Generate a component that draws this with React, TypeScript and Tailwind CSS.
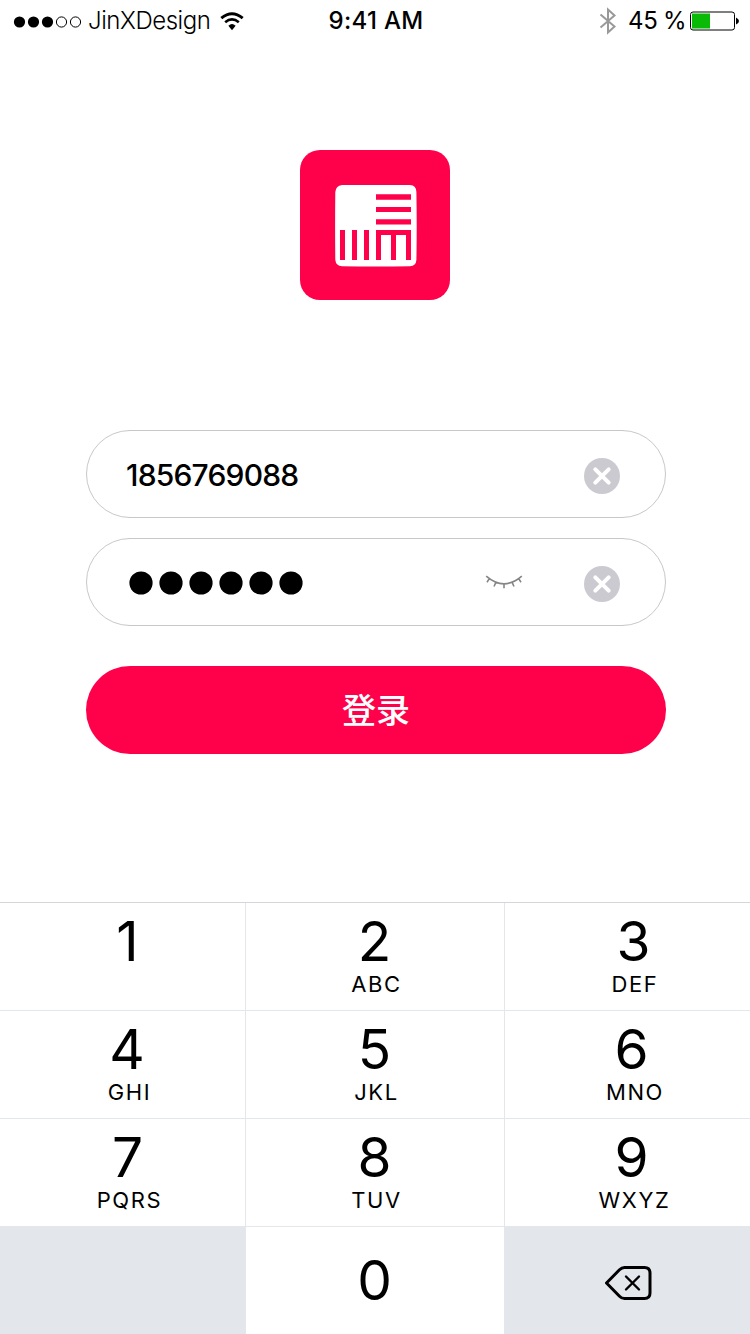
import React from "react";

type Key = { digit: string; letters?: string; digitShift: string; letterShift?: string };

const keys: Key[] = [
  { digit: "1", digitShift: "pl-[10px]" },
  { digit: "2", letters: "ABC", digitShift: "pr-[1px]", letterShift: "pl-[3px]" },
  { digit: "3", letters: "DEF", digitShift: "pl-[12px]", letterShift: "pl-[15px]" },
  { digit: "4", letters: "GHI", digitShift: "pl-[9px]", letterShift: "pl-[14px]" },
  { digit: "5", letters: "JKL", digitShift: "pr-[1px]", letterShift: "pl-[3px]" },
  { digit: "6", letters: "MNO", digitShift: "pl-[8px]", letterShift: "pl-[15px]" },
  { digit: "7", letters: "PQRS", digitShift: "pl-[10px]", letterShift: "pl-[14px]" },
  { digit: "8", letters: "TUV", digitShift: "pr-[1px]", letterShift: "pl-[3px]" },
  { digit: "9", letters: "WXYZ", digitShift: "pl-[8px]", letterShift: "pl-[14px]" },
];

function StatusBar() {
  return (
    <header className="grid h-10 grid-cols-[1fr_auto_1fr] text-black">
      <div className="flex h-10 items-center pl-[13px]">
        <svg width="70" height="14" viewBox="0 0 70 14" className="mt-[3px]">
          <circle cx="6.5" cy="7" r="5.6" />
          <circle cx="20.5" cy="7" r="5.6" />
          <circle cx="34.5" cy="7" r="5.6" />
          <circle cx="48.5" cy="7" r="5.1" fill="none" stroke="#000" />
          <circle cx="62.5" cy="7" r="5.1" fill="none" stroke="#000" />
        </svg>
        <span className="ml-[5px] w-[123px] pt-px text-[24px] leading-10 font-[350] tracking-[-0.45px] whitespace-nowrap">JinXDesign</span>
        <svg width="24" height="19" viewBox="0 0 24 19" className="mt-[2px] ml-[9px]">
          <path d="M1.3 6.2Q12 -2.8 22.7 6.2" fill="none" stroke="#000" strokeWidth="2.9" />
          <path d="M5.2 10.2Q12 4.6 18.8 10.2" fill="none" stroke="#000" strokeWidth="2.7" />
          <path d="M8.4 13.8Q12 10.4 15.6 13.8L12 18.2Z" />
        </svg>
      </div>
      <div className="pt-px pl-[2px] text-[24px] leading-10 font-[470] tracking-[0.3px]">9:41 AM</div>
      <div className="flex h-10 items-center justify-end pr-[11px]">
        <svg width="18" height="28" viewBox="0 0 18 28" className="mt-[2px]">
          <path d="M1.5 7.5L15.5 19.5L9 25.5V2.5L15.5 8.5L1.5 20.5" fill="none" stroke="#999" strokeWidth="2" />
        </svg>
        <span className="ml-[11px] w-[57px] pt-px text-[24px] leading-10 tracking-[-0.3px] [word-spacing:-1px] whitespace-nowrap">45 %</span>
        <svg width="49" height="20" viewBox="0 0 49 20" className="ml-[5px] mt-px">
          <rect x="0.5" y="1" width="44" height="18" rx="2.5" fill="#fff" stroke="#000" />
          <rect x="2" y="2.5" width="18" height="15" fill="#09bb07" />
          <path d="M46 6.5Q49 8 49 10Q49 12 46 13.5Z" />
        </svg>
      </div>
    </header>
  );
}

function Logo() {
  return (
    <svg width="150" height="150" viewBox="0 0 150 150">
      <rect width="150" height="150" rx="20" fill="#ff004a" />
      <path d="M42 35Q76 34.8 110 35Q116.4 35.4 116.4 42Q117 76 116.4 110Q116 116 110 116.2Q76 116.6 42 116.2Q36 116 35.3 110Q34.9 76 35.3 42Q36 35.6 42 35Z" fill="#fff" />
      <path
        fill="#ff004a"
        d="M76 44.3H111V49.7H76ZM76 57H111V62H76ZM76 69.3H111V74.5H76ZM40 80H45V110H40ZM52 80H57V110H52ZM64 80H69V110H64ZM76 80H111V110H106V85H96V110H91V85H81V110H76Z"
      />
    </svg>
  );
}

function ClearButton() {
  return (
    <button type="button" aria-label="清除" className="mt-[3px]">
      <svg width="36" height="36" viewBox="0 0 36 36">
        <circle cx="18" cy="18" r="18" fill="#cbcad0" />
        <path d="M11.3 11.3L24.7 24.7M24.7 11.3L11.3 24.7" stroke="#fff" strokeWidth="4" strokeLinecap="round" />
      </svg>
    </button>
  );
}

function ClosedEye() {
  return (
    <svg width="38" height="14" viewBox="0 0 38 14" fill="none" stroke="#858585" strokeWidth="1.6" className="mr-[61px]">
      <path d="M1.2 1.2Q19 16.5 36.8 1.2M4.3 3.6L2 7.2M11 7.2L9 11.5M19 9V13.3M27 7.2L29 11.5M33.7 3.6L36 7.2" />
    </svg>
  );
}

function Keypad() {
  return (
    <div className="grid h-[432px] grid-cols-[246px_258px_246px] grid-rows-[108px_108px_108px_107px] border-t border-[#d6d6da] bg-[#e3e6eb]">
      {keys.map((key, i) => (
        <button
          key={key.digit}
          type="button"
          className={`flex flex-col border-b border-[#e3e6eb] bg-white pt-[10px] ${i % 3 === 0 ? "border-r" : ""} ${i % 3 === 2 ? "border-l" : ""}`}
        >
          <span className={`w-full text-center text-[55px] leading-[56px] ${key.digitShift}`}>{key.digit}</span>
          {key.letters && (
            <span className={`mt-[3px] w-full text-center text-[22px] leading-6 tracking-[1.6px] ${key.letterShift}`}>{key.letters}</span>
          )}
        </button>
      ))}
      <div />
      <button type="button" className="bg-white pr-px text-center text-[55px] leading-[107px]">0</button>
      <button type="button" aria-label="删除" className="flex items-center justify-center pt-[5px] pl-[2px]">
        <svg width="48" height="36" viewBox="0 0 48 36" fill="none" stroke="#000" strokeLinecap="round" strokeLinejoin="round">
          <path d="M2.5 18L15.5 4.8Q17.8 2.5 20.5 2.5H40.5Q46 2.5 46 8V28Q46 33.5 40.5 33.5H20.5Q17.8 33.5 15.5 31.2Z" strokeWidth="3" />
          <path d="M22 11.5L35 24.5M35 11.5L22 24.5" strokeWidth="2.4" />
        </svg>
      </button>
    </div>
  );
}

export default function App() {
  return (
    <div className="flex h-[1334px] w-[750px] flex-col overflow-hidden bg-white font-['Inter','Noto_Sans_CJK_SC',sans-serif] text-black">
      <StatusBar />
      <main className="flex flex-1 flex-col items-center pt-[110px]">
        <Logo />
        <form className="mt-[130px] ml-[2px] flex w-[580px] flex-col">
          <div className="flex h-[88px] items-center justify-between rounded-full border border-[#c8c8ca] pr-[45px] pl-[39px]">
            <span className="pt-[3px] text-[30px] font-[450] tracking-[-0.8px]">1856769088</span>
            <ClearButton />
          </div>
          <div className="mt-5 flex h-[88px] items-center rounded-full border border-[#c8c8ca] pr-[45px] pl-[42px]">
            <svg width="180" height="24" viewBox="0 0 180 24" className="mt-[2px]">
              {[0, 1, 2, 3, 4, 5].map((i) => (
                <circle key={i} cx={12 + i * 30} cy="12" r="11.6" />
              ))}
            </svg>
            <div className="flex-1" />
            <ClosedEye />
            <ClearButton />
          </div>
          <button type="button" className="mt-10 h-[88px] rounded-full bg-[#ff004a] pt-px text-[34px] font-medium text-white">
            登录
          </button>
        </form>
      </main>
      <Keypad />
    </div>
  );
}
